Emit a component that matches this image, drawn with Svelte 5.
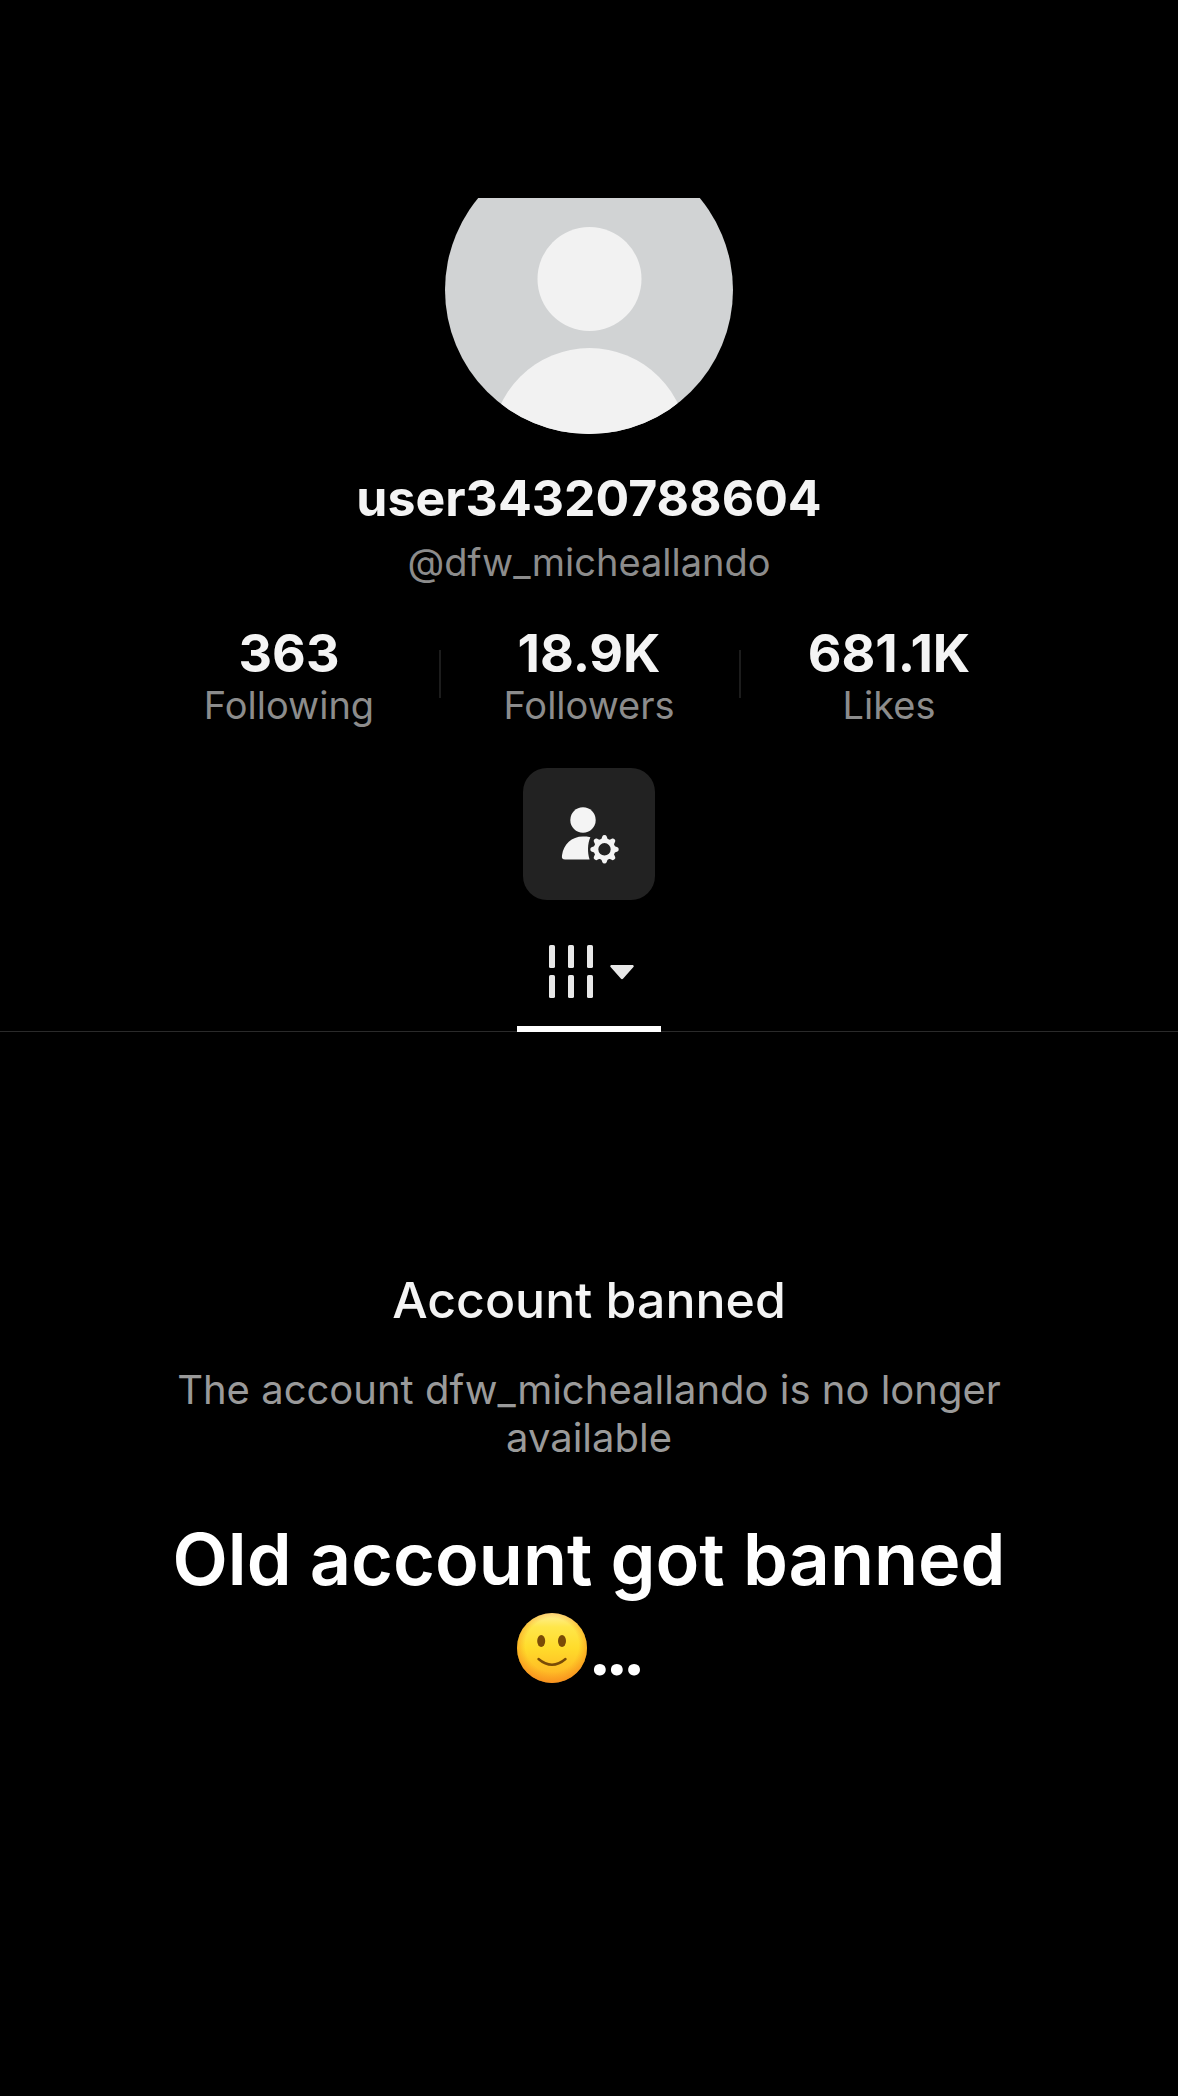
<script lang="ts">
	const user = {
		name: 'user34320788604',
		handle: 'dfw_micheallando'
	};

	const stats = [
		{ value: '363', label: 'Following' },
		{ value: '18.9K', label: 'Followers' },
		{ value: '681.1K', label: 'Likes' }
	];

	const gearTeeth = [0, 45, 90, 135, 180, 225, 270, 315];
</script>

<main class="screen">
	<header class="profile">
		<div class="avatar">
			<svg viewBox="0 0 288 288" role="img" aria-label="Profile photo">
				<defs>
					<clipPath id="avatar-clip"><circle cx="144" cy="144" r="144" /></clipPath>
				</defs>
				<g clip-path="url(#avatar-clip)">
					<rect width="288" height="288" fill="#d1d3d4" />
					<circle cx="144.5" cy="133" r="52" fill="#f2f2f2" />
					<circle cx="144.5" cy="300" r="98" fill="#f2f2f2" />
				</g>
			</svg>
		</div>

		<h1>{user.name}</h1>
		<p class="handle">@{user.handle}</p>

		<div class="stats">
			{#each stats as stat}
				<a class="stat" href="#{stat.label.toLowerCase()}">
					<strong>{stat.value}</strong>
					<span>{stat.label}</span>
				</a>
			{/each}
		</div>

		<button class="manage" type="button" aria-label="Account settings">
			<svg viewBox="0 0 60 64" aria-hidden="true">
				<circle cx="24" cy="18" r="12.7" fill="#f4f4f4" />
				<path
					d="M31.4 35.2C29 34.7 26.5 34.6 24 34.6C12.5 34.6 4.6 42.5 3 53.3C2.5 56.3 3.4 57.4 6.2 57.4H30.6C28.4 50.5 28.4 41.7 31.4 35.2Z"
					fill="#f4f4f4"
				/>
				<g transform="translate(45.5 47.3)" fill="#f4f4f4">
					{#each gearTeeth as angle}
						<path d="M-3.6 -9L-2.1 -13Q-1.7 -14.2 0 -14.2Q1.7 -14.2 2.1 -13L3.6 -9Z" transform="rotate({angle})" />
					{/each}
					<circle r="8.5" fill="none" stroke="#f4f4f4" stroke-width="4.6" />
				</g>
			</svg>
		</button>
	</header>

	<nav class="tabs">
		<button class="tab" type="button" aria-label="Videos">
			<svg class="grid-icon" viewBox="0 0 44 54" aria-hidden="true">
				{#each [0, 19, 38] as x}
					<rect {x} y="0" width="6" height="23" rx="1.6" />
					<rect {x} y="30" width="6" height="23" rx="1.6" />
				{/each}
			</svg>
			<svg class="caret" viewBox="0 0 24 15" aria-hidden="true">
				<path d="M1.2 0H22.8Q24.5 .8 23.2 2.3L13.2 13.5Q12 15 10.8 13.5L.8 2.3Q-.5 .8 1.2 0Z" />
			</svg>
		</button>
	</nav>

	<section class="notice">
		<h2>Account banned</h2>
		<p>The account {user.handle} is no longer available</p>
	</section>

	<p class="caption">
		Old account got banned
		<span class="caption-end">
			<svg viewBox="0 0 70 70" role="img" aria-label="Slightly smiling face">
				<defs>
					<linearGradient id="face" x1="0" y1="0" x2="0" y2="1">
						<stop offset="0" stop-color="#fff09a" />
						<stop offset=".2" stop-color="#ffe64a" />
						<stop offset=".5" stop-color="#ffdc2b" />
						<stop offset=".8" stop-color="#ffc026" />
						<stop offset="1" stop-color="#ffaa26" />
					</linearGradient>
					<radialGradient id="rim" cx=".5" cy=".46" r=".56">
						<stop offset=".68" stop-color="#f58a1b" stop-opacity="0" />
						<stop offset="1" stop-color="#f5851b" stop-opacity=".75" />
					</radialGradient>
				</defs>
				<circle cx="35" cy="35" r="35" fill="url(#face)" />
				<circle cx="35" cy="35" r="35" fill="url(#rim)" />
				<ellipse cx="24.2" cy="28" rx="4" ry="6" fill="#7a4b06" />
				<ellipse cx="45" cy="28" rx="4" ry="6" fill="#7a4b06" />
				<path
					d="M21.5 46Q35 57.5 48.5 46"
					fill="none"
					stroke="#7a4b06"
					stroke-width="2.4"
					stroke-linecap="round"
				/>
			</svg><span class="dots">...</span>&nbsp;
		</span>
	</p>
</main>

<style>
	:global(body) {
		margin: 0;
		background: #000;
	}

	.screen {
		min-height: 100vh;
		box-sizing: border-box;
		padding-top: 198px;
		background: #000;
		color: #f4f4f4;
		font-family: Inter, 'Liberation Sans', sans-serif;
		text-align: center;
	}

	.profile {
		display: flex;
		flex-direction: column;
		align-items: center;
	}

	.avatar {
		display: flex;
		align-items: flex-end;
		height: 236px;
		overflow: hidden;
	}

	.avatar svg {
		flex: none;
		width: 288px;
		height: 288px;
	}

	h1,
	h2,
	p {
		margin: 0;
	}

	h1 {
		margin-top: 34px;
		font-size: 50px;
		line-height: 60px;
		font-weight: 700;
	}

	.handle {
		margin-top: 10px;
		font-size: 38px;
		line-height: 48px;
		color: #8c8c8c;
	}

	.stats {
		display: grid;
		grid-template-columns: repeat(3, 300px);
		margin-top: 38px;
	}

	.stat {
		display: flex;
		flex-direction: column;
		align-items: center;
		position: relative;
		color: inherit;
		text-decoration: none;
	}

	.stat + .stat::before {
		content: '';
		position: absolute;
		left: 0;
		top: 26px;
		width: 2px;
		height: 48px;
		background: #1c1c1c;
	}

	.stat strong {
		font-size: 52px;
		line-height: 60px;
	}

	.stat span {
		font-size: 38px;
		line-height: 42px;
		color: #8c8c8c;
	}

	button {
		border: 0;
		background: none;
		color: inherit;
		cursor: pointer;
	}

	.manage {
		display: grid;
		place-items: center;
		width: 132px;
		height: 132px;
		margin-top: 42px;
		padding: 0;
		border-radius: 24px;
		background: #222;
	}

	.manage svg {
		width: 60px;
		height: 64px;
	}

	.tabs {
		display: flex;
		justify-content: center;
		margin-top: 35px;
		border-bottom: 1px solid #2a2a2a;
	}

	.tab {
		display: flex;
		justify-content: center;
		gap: 17px;
		width: 144px;
		margin-bottom: -1px;
		padding: 10px 0 27px 4px;
		border-bottom: 6px solid #fff;
	}

	.tab svg {
		fill: #e8e8e8;
	}

	.grid-icon {
		width: 44px;
		height: 54px;
	}

	.caret {
		width: 24px;
		height: 15px;
		margin-top: 20px;
	}

	.notice {
		max-width: 880px;
		margin: 238px auto 0;
	}

	.notice h2 {
		font-size: 50px;
		line-height: 60px;
		font-weight: 500;
	}

	.notice p {
		margin-top: 36px;
		font-size: 40px;
		line-height: 48px;
		color: #9a9a9a;
	}

	.caption {
		max-width: 900px;
		margin: 52px auto 0;
		font-size: 72px;
		line-height: 90px;
		font-weight: 600;
		color: #fff;
	}

	.caption-end {
		display: block;
	}

	.caption-end svg {
		width: 70px;
		height: 70px;
		margin-right: 4px;
		vertical-align: -8px;
	}

	.dots {
		font-family: Lato, sans-serif;
		font-weight: 900;
		line-height: 1;
	}
</style>
